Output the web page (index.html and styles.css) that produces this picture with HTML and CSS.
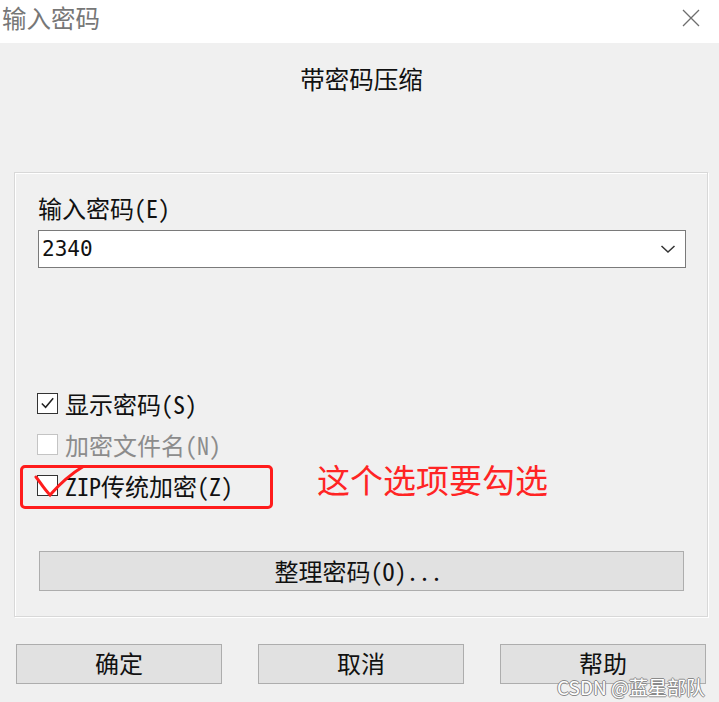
FILE: index.html
```html
<!DOCTYPE html>
<html lang="zh-CN">
<head>
<meta charset="utf-8">
<title>输入密码</title>
<link rel="stylesheet" href="styles.css">
</head>
<body>
<div class="dialog">
  <div class="titlebar">
    <span class="title">输入密码</span>
    <svg class="close" width="18" height="18" viewBox="0 0 18 18"><path d="M1 1L17 17M17 1L1 17" stroke="#6e6e6e" stroke-width="1.3" fill="none"/></svg>
  </div>
  <div class="heading">带密码压缩</div>
  <div class="group">
    <div class="label">输入密码(E)</div>
    <div class="combo">
      <span class="value">2340</span>
      <svg class="chev" width="16" height="10" viewBox="0 0 16 10"><path d="M1.5 2L8 8L14.5 2" stroke="#333" stroke-width="1.5" fill="none"/></svg>
    </div>
    <div class="checks">
      <div class="check">
        <span class="box on"><svg width="20" height="20" viewBox="0 0 20 20"><path d="M4 10.5L8 14.5L16 5" stroke="#222" stroke-width="1.6" fill="none"/></svg></span>
        <span>显示密码(S)</span>
      </div>
      <div class="check disabled">
        <span class="box"></span>
        <span>加密文件名(N)</span>
      </div>
      <div class="check">
        <span class="box"></span>
        <span>ZIP传统加密(Z)</span>
      </div>
    </div>
    <div class="wide-btn">整理密码(O)...</div>
  </div>
  <div class="buttons">
    <div class="btn">确定</div>
    <div class="btn">取消</div>
    <div class="btn">帮助</div>
  </div>
  <div class="mark-rect"></div>
  <svg class="mark-tick" width="70" height="40" viewBox="0 0 70 40"><path d="M3 12C7 17 11 24 17 30C24 22 36 10 51 1" stroke="#ff1c1c" stroke-width="3" fill="none" stroke-linecap="round"/></svg>
  <div class="mark-text">这个选项要勾选</div>
  <div class="watermark">CSDN @蓝星部队</div>
</div>
</body>
</html>
```
FILE: styles.css
```css
* { box-sizing: border-box; }
html, body { margin: 0; padding: 0; }
body {
  width: 719px;
  height: 702px;
  background: #f0f0f0;
  font-family: "Noto Sans Mono CJK SC", "Noto Sans CJK SC", "Noto Sans", sans-serif;
  color: #111;
  overflow: hidden;
}
.dialog {
  position: relative;
  width: 719px;
  height: 702px;
  display: flex;
  flex-direction: column;
}
.titlebar {
  height: 43px;
  background: #fff;
  display: flex;
  align-items: center;
  justify-content: space-between;
  padding: 0 19px 0 2px;
}
.title {
  font-size: 24.5px;
  color: #777;
  line-height: 30px;
  margin-top: -8px;
}
.close { margin-top: -8px; }
.heading {
  margin-top: 21px;
  text-align: center;
  font-size: 24.5px;
  line-height: 30px;
  padding-left: 4px;
}
.group {
  margin: 78px 11px 0 14px;
  height: 445px;
  border: 1px solid #d8d8d8;
  box-shadow: 1px 1px 0 #fff, inset 1px 1px 0 #fff;
  padding: 20px 21px 0 23px;
  display: flex;
  flex-direction: column;
}
.label {
  font-size: 24px;
  line-height: 30px;
  height: 37px;
}
.combo {
  width: 648px;
  height: 38px;
  background: #fff;
  border: 1px solid #7a7a7a;
  display: flex;
  align-items: center;
  justify-content: space-between;
  padding: 0 9px 0 3px;
}
.value {
  font-family: "DejaVu Sans Mono", monospace;
  font-size: 21px;
  color: #111;
}
.checks {
  margin-top: 120px;
  display: flex;
  flex-direction: column;
  gap: 11px;
}
.check {
  display: flex;
  align-items: center;
  height: 30px;
  font-size: 24px;
  gap: 7px;
  margin-left: -1px;
}
.check.disabled { color: #8c8c8c; }
.box {
  width: 21px;
  height: 21px;
  border: 1px solid #333;
  background: #fff;
  display: flex;
  align-items: center;
  justify-content: center;
}
.box svg { display: block; }
.check.disabled .box { border-color: #c4c4c4; }
.wide-btn {
  margin: 51px 0 0 1px;
  width: 645px;
  height: 40px;
  background: #e1e1e1;
  border: 1px solid #adadad;
  display: flex;
  align-items: center;
  justify-content: center;
  font-size: 24px;
  padding: 0 6px 2px 0;
}
.buttons {
  margin-top: 27px;
  padding-left: 16px;
  display: flex;
  gap: 36px;
}
.btn {
  width: 206px;
  height: 40px;
  background: #e1e1e1;
  border: 1px solid #adadad;
  display: flex;
  align-items: center;
  justify-content: center;
  font-size: 24px;
  padding-bottom: 3px;
}
.mark-rect {
  position: absolute;
  left: 20px;
  top: 465px;
  width: 253px;
  height: 44px;
  border: 3px solid #ff1c1c;
  border-radius: 5px;
}
.mark-tick {
  position: absolute;
  left: 33px;
  top: 465px;
}
.mark-text {
  position: absolute;
  left: 317px;
  top: 458px;
  font-family: "Noto Sans CJK SC", sans-serif;
  font-size: 33px;
  line-height: 42px;
  color: #ff2424;
}
.watermark {
  position: absolute;
  right: 14px;
  top: 675px;
  font-family: "Noto Sans CJK SC", sans-serif;
  font-size: 19px;
  line-height: 24px;
  color: #fff;
  text-shadow: -1px 0 #8a8a8a, 1px 0 #8a8a8a, 0 -1px #8a8a8a, 0 1px #8a8a8a;
}
```
